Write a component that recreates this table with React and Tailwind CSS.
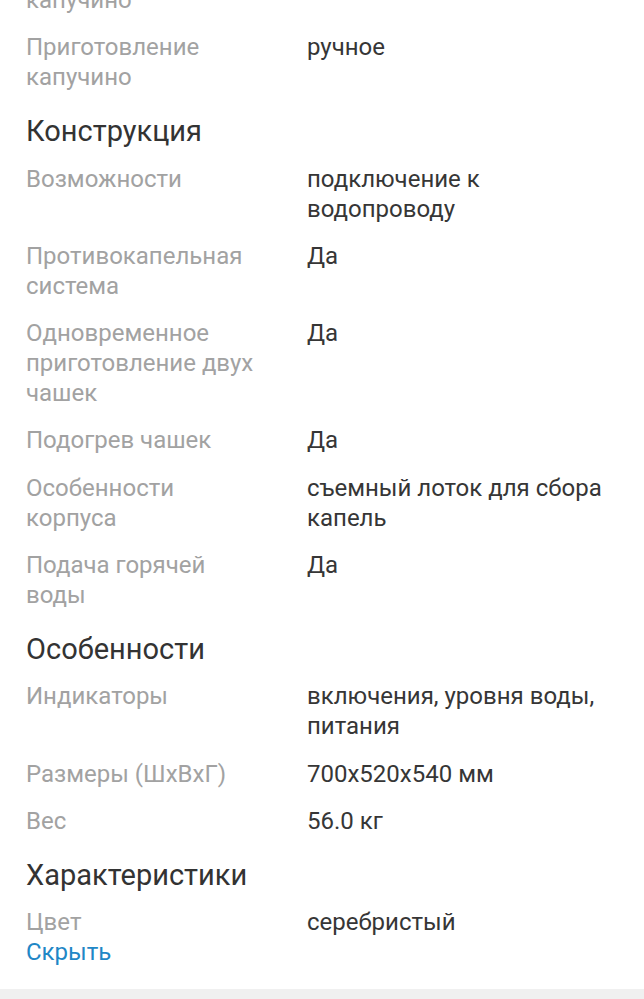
import React from "react";

const sections = [
  {
    title: null,
    rows: [
      [["капучино"], [""]],
      [["Приготовление", "капучино"], ["ручное"]],
    ],
  },
  {
    title: "Конструкция",
    rows: [
      [["Возможности"], ["подключение к", "водопроводу"]],
      [["Противокапельная", "система"], ["Да"]],
      [["Одновременное", "приготовление двух", "чашек"], ["Да"]],
      [["Подогрев чашек"], ["Да"]],
      [["Особенности", "корпуса"], ["съемный лоток для сбора", "капель"]],
      [["Подача горячей", "воды"], ["Да"]],
    ],
  },
  {
    title: "Особенности",
    rows: [
      [["Индикаторы"], ["включения, уровня воды,", "питания"]],
      [["Размеры (ШxВxГ)"], ["700x520x540 мм"]],
      [["Вес"], ["56.0 кг"]],
    ],
  },
  {
    title: "Характеристики",
    rows: [[["Цвет"], ["серебристый"]]],
  },
];

function Lines({ lines }) {
  return lines.map((l, i) => (
    <span key={i} className="block whitespace-nowrap">
      {l}
    </span>
  ));
}

function Row({ label, value, first }) {
  return (
    <div
      className={`grid grid-cols-[255px_1fr] gap-x-[26px] ${first ? "" : "mt-[17.3px]"}`}
    >
      <div className="text-[#a2a2a2]">
        <Lines lines={label} />
      </div>
      <div className="text-[#363636]">
        <Lines lines={value} />
      </div>
    </div>
  );
}

export default function App() {
  return (
    <div
      className="bg-white text-[24px] leading-[30px] overflow-hidden"
      style={{ fontFamily: "Roboto, 'Noto Sans', sans-serif" }}
    >
      <div className="px-[26px] mt-[-15px] pb-[22px]">
        {sections.map((s, si) => (
          <div key={si}>
            {s.title && (
              <h2 className="mt-[24px] text-[29px] leading-[30px] text-[#333333]">
                {s.title}
              </h2>
            )}
            {s.rows.map((r, ri) => (
              <Row
                key={ri}
                label={r[0]}
                value={r[1]}
                first={si === 0 && ri === 0}
              />
            ))}
          </div>
        ))}
        <div className="text-[#1f87c6]">Скрыть</div>
      </div>
      <div className="h-[40px] bg-[#f0f0f0]" />
    </div>
  );
}
